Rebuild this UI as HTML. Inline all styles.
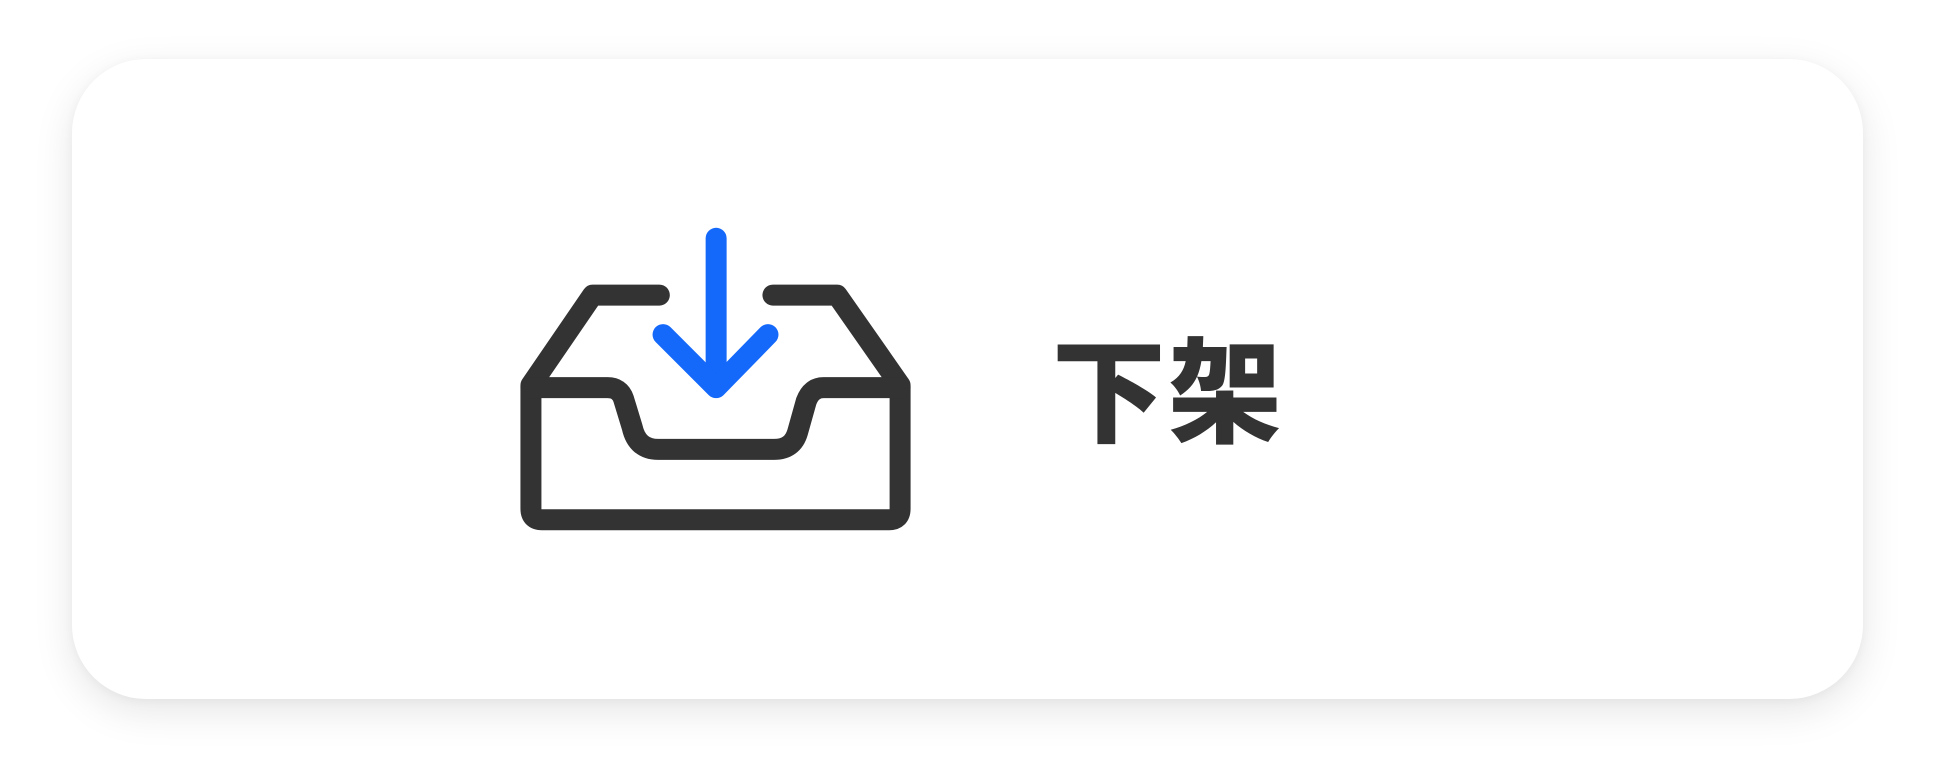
<!DOCTYPE html>
<html><head><meta charset="utf-8">
<style>
html,body{margin:0;padding:0;background:#fff;width:1936px;height:784px;overflow:hidden}
.card{position:absolute;left:72px;top:59px;width:1791px;height:640px;border-radius:74px;background:#fff;box-shadow:0 12px 40px rgba(0,0,0,0.10),0 2px 10px rgba(0,0,0,0.04)}
svg{position:absolute;left:0;top:0}
</style></head><body>
<div class="card"></div>
<svg width="1936" height="784" viewBox="0 0 1568 635">
<g fill="none" stroke="#333" stroke-width="17" stroke-linecap="round" stroke-linejoin="round">
<path d="M534 239 H480 L430 312 V412 Q430 421 439 421 H720 Q729 421 729 412 V312 L678 239 H626"/>
<path d="M430 314 H492 Q502 314 505 323 L512 346 Q516 364 533 364 H627 Q642 364 646 350 L653 325 Q657 314 667 314 H729"/>
</g>
<g fill="none" stroke="#1469FB" stroke-width="17" stroke-linecap="round" stroke-linejoin="round">
<path d="M580 193 V312"/>
<path d="M537 271 L580 314 L622 271"/>
</g>
<text x="852" y="351" font-family="'Liberation Sans','Noto Sans CJK SC',sans-serif" font-weight="900" font-size="92" fill="#333" letter-spacing="2">下架</text>
</svg>
</body></html>
